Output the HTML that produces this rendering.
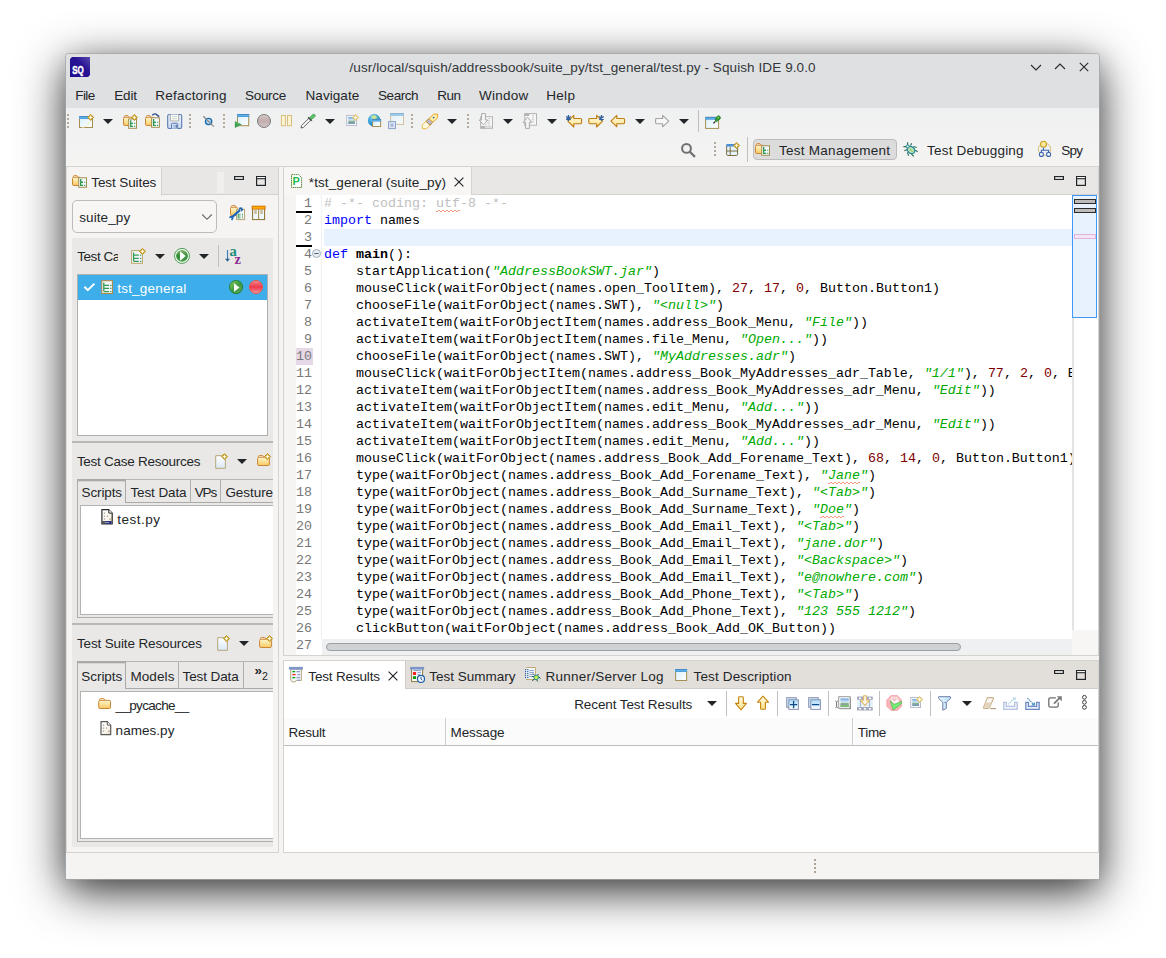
<!DOCTYPE html>
<html lang="en">
<head>
<meta charset="utf-8">
<title>/usr/local/squish/addressbook/suite_py/tst_general/test.py - Squish IDE 9.0.0</title>
<style>

*{box-sizing:border-box;margin:0;padding:0}
html,body{width:1166px;height:958px;overflow:hidden;background:#fff}
body{position:relative;font-family:"Liberation Sans",sans-serif;font-size:13.5px;color:#232629;line-height:normal}
div,span,svg,pre,nav,header,section,ul,li,b,i{position:absolute;display:block}
.t{white-space:pre;font-style:normal;font-weight:400}
.ic{overflow:visible}
#win{left:66px;top:54px;width:1033px;height:825px;background:#f5f4f3;border-radius:3px 3px 0 0;
 box-shadow:0 0 0 1px rgba(164,167,170,.72),0 12px 48px rgba(0,0,0,.78),0 6px 24px rgba(0,0,0,.18)}
#titlebar{left:66px;top:54px;width:1033px;height:54px;background:#dee0e2;border-radius:3px 3px 0 0}
#toolbar{left:66px;top:108px;width:1033px;height:58px;background:linear-gradient(#eff0f1,#f2f2f2 50%,#f5f4f3)}
.hl{background:#d8d4d0}
.vsep{width:1px;background:#c0bfbc}
.dots{width:2px;height:14px;background:repeating-linear-gradient(#b4aa9c 0 2px,transparent 2px 4px)}
.panel{border:1px solid #d6d2ce;background:#f5f4f3}
.tabbar{background:#e8e7e6;border-bottom:1px solid #d5d1cc}
.tab{background:#f5f4f3;border-right:1px solid #d5d1cc}
.sect{background:#e9e8e6}
.white{background:#fff}
.code{font-family:"Liberation Mono",monospace;font-size:13.3333px;line-height:17px;white-space:pre;color:#000}
.code div{position:static;height:17px}
.code span,.code b,.code i{position:static;display:inline}
.k{color:#0000ff}
.s{color:#00aa00;font-style:italic}
.n{color:#800000}
.c{color:#c0c0c0}
.f{font-weight:700}
.sq{background:linear-gradient(135deg,transparent 35%,#f79a80 35% 65%,transparent 65%) 0 100%/4px 2px repeat-x,linear-gradient(45deg,transparent 35%,#f79a80 35% 65%,transparent 65%) 2px 100%/4px 2px repeat-x;padding-bottom:1px}
.ln{font-family:"Liberation Mono",monospace;font-size:13.3333px;line-height:17px;color:#787878;text-align:right;white-space:pre}
.ln div{position:static;height:17px}

</style>
</head>
<body>
<svg width="0" height="0" style="position:absolute;left:0;top:0"><defs>
<linearGradient id="gFold" x1="0" y1="0" x2="0" y2="1"><stop offset="0" stop-color="#fff6cf"/><stop offset=".45" stop-color="#fbe39d"/><stop offset="1" stop-color="#f7c860"/></linearGradient>
<linearGradient id="gArr" x1="0" y1="0" x2="0" y2="1"><stop offset="0" stop-color="#fffbe6"/><stop offset="1" stop-color="#fde08a"/></linearGradient>
<linearGradient id="gWin" x1="0" y1="0" x2="1" y2="1"><stop offset="0" stop-color="#d6f0fd"/><stop offset="1" stop-color="#ffffff"/></linearGradient>
<linearGradient id="gTitle" x1="0" y1="0" x2="0" y2="1"><stop offset="0" stop-color="#3a73b4"/><stop offset=".5" stop-color="#59b4ea"/><stop offset="1" stop-color="#4c8ed0"/></linearGradient>
<linearGradient id="gDoc" x1="0" y1="0" x2="0" y2="1"><stop offset="0" stop-color="#ffffff"/><stop offset="1" stop-color="#d9e8fb"/></linearGradient>
<linearGradient id="gRec" x1="0" y1="0" x2="0" y2="1"><stop offset="0" stop-color="#d6c8c8"/><stop offset=".5" stop-color="#c2adad"/><stop offset="1" stop-color="#d4c6c6"/></linearGradient>
<linearGradient id="gRed" x1="0" y1="0" x2="0" y2="1"><stop offset="0" stop-color="#f28c8c"/><stop offset=".5" stop-color="#f0384e"/><stop offset="1" stop-color="#f49a9a"/></linearGradient>
<linearGradient id="gGreen" x1="0" y1="0" x2="1" y2="1"><stop offset="0" stop-color="#8fd45c"/><stop offset=".5" stop-color="#3f9a40"/><stop offset="1" stop-color="#5aa65a"/></linearGradient>
<linearGradient id="gRun" x1="0" y1="0" x2="0" y2="1"><stop offset="0" stop-color="#86b870"/><stop offset=".5" stop-color="#2f8a35"/><stop offset="1" stop-color="#4ea04c"/></linearGradient>
<linearGradient id="gSave" x1="0" y1="0" x2="0" y2="1"><stop offset="0" stop-color="#f2f6fc"/><stop offset="1" stop-color="#c9d8f0"/></linearGradient>
<linearGradient id="gSky" x1="0" y1="0" x2="0" y2="1"><stop offset="0" stop-color="#6aa0e0"/><stop offset=".45" stop-color="#d8ecf8"/><stop offset=".6" stop-color="#8eb48e"/><stop offset="1" stop-color="#6f92c0"/></linearGradient>
<linearGradient id="gFun" x1="0" y1="0" x2="1" y2="0"><stop offset="0" stop-color="#f0faff"/><stop offset="1" stop-color="#b4e0fb"/></linearGradient>
<linearGradient id="gSq" x1="0" y1="0" x2="0" y2="1"><stop offset="0" stop-color="#a9dcfb"/><stop offset="1" stop-color="#ffffff"/></linearGradient>
<radialGradient id="gGlobe" cx=".4" cy=".3" r=".8"><stop offset="0" stop-color="#7fd0f4"/><stop offset=".6" stop-color="#2a98d6"/><stop offset="1" stop-color="#1d72b4"/></radialGradient>
<linearGradient id="gPage" x1="0" y1="0" x2="1" y2="1"><stop offset="0" stop-color="#ffffff"/><stop offset=".6" stop-color="#fbf6ee"/><stop offset="1" stop-color="#ecd9b8"/></linearGradient>
<linearGradient id="gPen" x1="0" y1="0" x2="1" y2="1"><stop offset="0" stop-color="#f8b030"/><stop offset=".5" stop-color="#fdf2b0"/><stop offset="1" stop-color="#f0a020"/></linearGradient>
</defs></svg>
<div id="win"></div>
<header id="titlebar"></header>
<svg class="ic" style="left:70px;top:57px" width="20" height="20" viewBox="0 0 20 20"><defs><linearGradient id="sqg" x1="0" y1="1" x2="1" y2="0"><stop offset="0" stop-color="#1d0a8c"/><stop offset=".6" stop-color="#2a1496"/><stop offset="1" stop-color="#5a48ac"/></linearGradient></defs><path d="M2 0H20V18L18 20H0V2Z" fill="url(#sqg)"/><text transform="translate(2.3 16.5) scale(.78 1)" style="font-family:'Liberation Sans',sans-serif;font-weight:700;font-size:10.2px" fill="#fff" stroke="#fff" stroke-width=".45">SQ</text></svg>
<span class="t" style="left:349.5px;top:60.00px;letter-spacing:0.089px;color:#33373a;">/usr/local/squish/addressbook/suite_py/tst_general/test.py - Squish IDE 9.0.0</span>
<svg class="ic" style="left:1026px;top:57px" width="68" height="20" viewBox="0 0 68 20" fill="none" stroke="#26292c" stroke-width="1.1"><path d="M5 8L10 13L15 8"/><path d="M29 12L34 7L39 12"/><path d="M53.8 5.8L62.2 14.2M62.2 5.8L53.8 14.2"/></svg>
<span class="t" style="left:75.2px;top:88.00px;letter-spacing:-0.555px;">File</span>
<span class="t" style="left:114.3px;top:88.00px;letter-spacing:-0.189px;">Edit</span>
<span class="t" style="left:155.3px;top:88.00px;letter-spacing:0.215px;">Refactoring</span>
<span class="t" style="left:245px;top:88.00px;letter-spacing:-0.316px;">Source</span>
<span class="t" style="left:305.5px;top:88.00px;letter-spacing:0.072px;">Navigate</span>
<span class="t" style="left:378.1px;top:88.00px;letter-spacing:-0.476px;">Search</span>
<span class="t" style="left:437.2px;top:88.00px;letter-spacing:-0.533px;">Run</span>
<span class="t" style="left:478.9px;top:88.00px;letter-spacing:0.277px;">Window</span>
<span class="t" style="left:546.3px;top:88.00px;letter-spacing:0.278px;">Help</span>
<div id="toolbar"></div>
<div class="hl" style="left:66px;top:166px;width:1033px;height:1px;"></div>
<div class="dots" style="left:67px;top:114px;width:2px;height:14px;"></div>
<svg class="ic" style="left:78px;top:113px;" width="16" height="16" viewBox="0 0 16 16"><g><rect x="1.5" y="3.5" width="13" height="11" fill="url(#gWin)" stroke="#a68d52"/><rect x="1" y="3" width="14" height="3" fill="url(#gTitle)"/></g><path d="M4 14.4Q10.5 14 11.6 8" stroke="#f8ecc0" stroke-width="1.1" fill="none" opacity=".8"/><path d="M12.6 1.3000000000000003L15.7 4.4L12.6 7.5L9.5 4.4Z" fill="#d3ac3a" stroke="#b98f1c" stroke-width=".9" stroke-linejoin="round"/><path d="M12.6 2.1000000000000005L13.2 3.8000000000000003L14.899999999999999 4.4L13.2 5.0L12.6 6.7L12.0 5.0L10.3 4.4L12.0 3.8000000000000003Z" fill="#fffdf2"/></svg>
<svg class="ic" style="left:103px;top:119px" width="10" height="5" viewBox="0 0 10 5"><path d="M0 0H10L5 5Z" fill="#232629"/></svg>
<svg class="ic" style="left:123px;top:113px;" width="16" height="16" viewBox="0 0 16 16"><path d="M1.4 4.6000000000000005V3.6Q1.4 2.5 2.5 2.5H4.199999999999999Q5.3 2.5 5.3 3.6V4.6000000000000005Z" fill="#fffaf0" stroke="#cf8a3e" stroke-width="1" stroke-linejoin="round"/><rect x="0.5" y="4.2" width="8" height="8.3" rx="1.3" fill="url(#gFold)" stroke="#cc8638" stroke-width="1"/><rect x="5.7" y="6.0" width="7.800000000000001" height="9.3" fill="#f6f8fd" stroke="#a28f4e"/><path d="M7.7 7.3V13.3H10.0M7.7 10.35H10.0" fill="none" stroke="#2b9a50" stroke-width="1.3"/><path d="M11.2 10.35h1.1M11.2 13.3h1.1" stroke="#2b9a50" stroke-width="1.2"/><path d="M11.4 1.4L14.5 4.5L11.4 7.6L8.3 4.5Z" fill="#d3ac3a" stroke="#b98f1c" stroke-width=".9" stroke-linejoin="round"/><path d="M11.4 2.2L12.0 3.9L13.7 4.5L12.0 5.1L11.4 6.8L10.8 5.1L9.100000000000001 4.5L10.8 3.9Z" fill="#fffdf2"/></svg>
<svg class="ic" style="left:145px;top:113px;" width="16" height="16" viewBox="0 0 16 16"><path d="M1.4 4.6000000000000005V3.6Q1.4 2.5 2.5 2.5H4.199999999999999Q5.3 2.5 5.3 3.6V4.6000000000000005Z" fill="#fffaf0" stroke="#cf8a3e" stroke-width="1" stroke-linejoin="round"/><rect x="0.5" y="4.2" width="8" height="8.3" rx="1.3" fill="url(#gFold)" stroke="#cc8638" stroke-width="1"/><rect x="6.6" y="4.8" width="7.800000000000001" height="9.5" fill="#f6f8fd" stroke="#a28f4e"/><path d="M8.6 6.1V12.3H10.899999999999999M8.6 9.25H10.899999999999999" fill="none" stroke="#2b9a50" stroke-width="1.3"/><path d="M12.1 9.25h1.1M12.1 12.3h1.1" stroke="#2b9a50" stroke-width="1.2"/><path d="M7.3 2.2Q10 -.6 12.6 2.4" fill="none" stroke="#1d3f80" stroke-width="1.3"/><path d="M11 2.2H14.2V4.6Z" fill="#1d3f80"/></svg>
<svg class="ic" style="left:167px;top:113px;" width="16" height="16" viewBox="0 0 16 16"><rect x=".7" y="1.5" width="14" height="14" rx="1.6" fill="url(#gSave)" stroke="#5b79b2" stroke-width="1.1"/><path d="M3.3 1.6V7Q3.3 7.8 4.1 7.8H10.9Q11.7 7.8 11.7 7V1.6" fill="#fcfdf6" stroke="#8f9ca2" stroke-width=".9"/><path d="M5 3.6H10M5 5.6H10" stroke="#c3ccd0" stroke-width=".8"/><path d="M4 7.2H11" stroke="#efe6c0" stroke-width=".8"/><path d="M4.5 15.4V11.2Q4.5 10.3 5.4 10.3H9.8Q10.7 10.3 10.7 11.2V15.4" fill="#e9effa" stroke="#5b79b2" stroke-width="1"/><rect x="5.6" y="11.6" width="2.4" height="3.2" fill="#a9c3ee"/><rect x="8.6" y="11.6" width="1.1" height="3.2" fill="#2e4f8e"/></svg>
<div class="dots" style="left:189px;top:114px;width:2px;height:14px;"></div>
<svg class="ic" style="left:201px;top:113px;" width="16" height="16" viewBox="0 0 16 16"><circle cx="7.6" cy="8.5" r="3.1" fill="#b9dcf0" stroke="#1c6bb0" stroke-width="1.4"/><path d="M2.3 3.2L12.8 13.6" stroke="#8b8b8b" stroke-width="1.3"/></svg>
<div class="dots" style="left:223px;top:114px;width:2px;height:14px;"></div>
<svg class="ic" style="left:234px;top:113px;" width="16" height="16" viewBox="0 0 16 16"><g><rect x="3.5" y="1.5" width="11.2" height="11.2" fill="url(#gWin)" stroke="#a68d52"/><rect x="3" y="1" width="12.2" height="3" fill="url(#gTitle)"/></g><path d="M.9 8V15L7.9 11.5Z" fill="#3f9f4f"/><path d="M1.6 9.4L5.4 11.2" stroke="#7cc87c" stroke-width=".8"/></svg>
<svg class="ic" style="left:256px;top:113px;" width="16" height="16" viewBox="0 0 16 16"><circle cx="8" cy="8" r="6.5" fill="url(#gRec)" stroke="#7e7e7e" stroke-width="1"/></svg>
<svg class="ic" style="left:279px;top:113px;" width="16" height="16" viewBox="0 0 16 16"><rect x="2.4" y="2.5" width="4" height="10.2" fill="#fdf3d0" stroke="#d7bf7e"/><rect x="8.5" y="2.5" width="4" height="10.2" fill="#fdf3d0" stroke="#d7bf7e"/></svg>
<svg class="ic" style="left:300px;top:113px;" width="16" height="16" viewBox="0 0 16 16"><path d="M1 15L1.6 12.6L9 5.2L10.8 7L3.4 14.4Z" fill="#fff" stroke="#5a5a5a" stroke-width="1" stroke-linejoin="round"/><path d="M8.2 4.2L11.8 7.8" stroke="#4a4a4a" stroke-width="1.6"/><path d="M9.8 4.6L12.6 1.6Q14 .6 15 1.8Q15.8 3 14.4 4.2L11.4 6.4Z" fill="#53cc68" stroke="#4a8a56" stroke-width=".7"/></svg>
<svg class="ic" style="left:325px;top:119px" width="10" height="5" viewBox="0 0 10 5"><path d="M0 0H10L5 5Z" fill="#232629"/></svg>
<svg class="ic" style="left:345px;top:113px;" width="16" height="16" viewBox="0 0 16 16"><rect x="1.7" y="2.5" width="9.8" height="10" fill="#fafcff" stroke="#b9bccb"/><rect x="3.2" y="4" width="6.800000000000001" height="7" fill="url(#gSky)"/><path d="M10.6 1.4L13.7 4.5L10.6 7.6L7.5 4.5Z" fill="#e8d28e" stroke="#d9bf6e" stroke-width=".9" stroke-linejoin="round"/><path d="M10.6 2.2L11.2 3.9L12.899999999999999 4.5L11.2 5.1L10.6 6.8L10.0 5.1L8.3 4.5L10.0 3.9Z" fill="#fffdf2"/></svg>
<svg class="ic" style="left:367px;top:113px;" width="16" height="16" viewBox="0 0 16 16"><circle cx="7.2" cy="7.4" r="6.3" fill="url(#gGlobe)"/><path d="M4 3.5Q6 1.8 8.5 2.4Q10.4 3.4 9.6 5Q8 6.6 6 5.6Q4.4 5.4 4 3.5Z" fill="#cfe28c"/><path d="M10 3.2Q11.8 4 11.6 5.4L10.4 5Z" fill="#7fbf4a"/><g><rect x="5.6" y="6.6" width="8" height="6.9" fill="url(#gWin)" stroke="#a68d52"/><rect x="5.1" y="6.1" width="9" height="2.4" fill="url(#gTitle)"/></g></svg>
<svg class="ic" style="left:388px;top:113px;" width="16" height="16" viewBox="0 0 16 16"><g opacity=".6"><rect x="2.6" y="0.6" width="12.9" height="10.8" fill="url(#gWin)" stroke="#b9a468"/><rect x="2.1" y="0.1" width="13.9" height="2.6" fill="url(#gTitle)"/></g><rect x=".5" y="8.6" width="7" height="7" fill="#dfe5f3" stroke="#8da2cc"/><rect x="2.4" y="10.5" width="3.2" height="3.2" fill="#a9b7dc"/></svg>
<div class="dots" style="left:411px;top:114px;width:2px;height:14px;"></div>
<svg class="ic" style="left:422px;top:113px;" width="16" height="16" viewBox="0 0 16 16"><path d="M.4 15.6L.2 12L6 6.6L10 10.4L4.4 15.8Z" fill="#fffbe0" stroke="#f0b030" stroke-width=".9" stroke-linejoin="round"/><path d="M4 8.4L7 5.4L10.8 9.2L8 12.2Z" fill="#bdb8c6" stroke="#a8853c" stroke-width=".9"/><path d="M7 5.4L11.6 1.2L15.4 1L15.6 5L10.8 9.2Z" fill="#fdf0ae" stroke="#f0a428" stroke-width="1" stroke-linejoin="round"/><circle cx="11.6" cy="4.6" r=".9" fill="#3559a8"/></svg>
<svg class="ic" style="left:447px;top:119px" width="10" height="5" viewBox="0 0 10 5"><path d="M0 0H10L5 5Z" fill="#232629"/></svg>
<div class="dots" style="left:467px;top:114px;width:2px;height:14px;"></div>
<svg class="ic" style="left:478px;top:113px;" width="16" height="16" viewBox="0 0 16 16"><rect x="2.7" y="3.7" width="11.8" height="11.6" fill="#f7f7f7" stroke="#b4b4b4"/><path d="M10.2 5.7h2M10.2 7.8h2M9.2 9.9h3M7.2 12.0h2M10.2 12.0h2" stroke="#c8c8c8" stroke-width="1"/><rect x="2.7" y="13" width="4.6" height="2.4" fill="#b4b4b4"/><path d="M8 13.9h6" stroke="#c8c8c8" stroke-width="1"/><path d="M3.6 .6H7.4V7H9.8L5.5 11.8L1.2 7H3.6Z" fill="#f8f8f8" stroke="#a9a9a9" stroke-width="1" stroke-linejoin="round"/></svg>
<svg class="ic" style="left:503px;top:119px" width="10" height="5" viewBox="0 0 10 5"><path d="M0 0H10L5 5Z" fill="#232629"/></svg>
<svg class="ic" style="left:522px;top:113px;" width="16" height="16" viewBox="0 0 16 16"><rect x="2.7" y="0.6" width="11.8" height="11.6" fill="#f7f7f7" stroke="#b4b4b4"/><path d="M10.2 2.6h2M10.2 4.699999999999999h2M9.2 6.8h3M7.2 8.9h2M10.2 8.9h2" stroke="#c8c8c8" stroke-width="1"/><rect x="2.7" y=".6" width="4.6" height="2.4" fill="#b4b4b4"/><path d="M5.5 4.2L9.8 9.4H7.4V15.4H3.6V9.4H1.2Z" fill="#f4f4f4" stroke="#a9a9a9" stroke-width="1" stroke-linejoin="round"/></svg>
<svg class="ic" style="left:547px;top:119px" width="10" height="5" viewBox="0 0 10 5"><path d="M0 0H10L5 5Z" fill="#232629"/></svg>
<svg class="ic" style="left:566px;top:113px;" width="16" height="16" viewBox="0 0 16 16"><path d="M1.8 8.2L7.8 2.4V5.5H14.4Q15.6 5.5 15.6 6.6V9.6Q15.6 10.7 14.4 10.7H7.8V14Z" fill="url(#gArr)" stroke="#bf7d12" stroke-width="1.1" stroke-linejoin="round"/><path d="M2.4 1.9000000000000004V7.9M0.10000000000000009 3.4000000000000004L4.699999999999999 6.4M0.10000000000000009 6.4L4.699999999999999 3.4000000000000004" stroke="#2f5f9e" stroke-width="1.25" fill="none"/></svg>
<svg class="ic" style="left:588px;top:113px;" width="16" height="16" viewBox="0 0 16 16"><path d="M14.6 8.2L8.6 2.4V5.5H2Q.8 5.5 .8 6.6V9.6Q.8 10.7 2 10.7H8.6V14Z" fill="url(#gArr)" stroke="#bf7d12" stroke-width="1.1" stroke-linejoin="round"/><path d="M13.5 1.9000000000000004V7.9M11.2 3.4000000000000004L15.8 6.4M11.2 6.4L15.8 3.4000000000000004" stroke="#2f5f9e" stroke-width="1.25" fill="none"/></svg>
<svg class="ic" style="left:610px;top:113px;" width="16" height="16" viewBox="0 0 16 16"><path d="M1 8.1L6.8 2.4V5.5H13.4Q14.6 5.5 14.6 6.6V9.6Q14.6 10.7 13.4 10.7H6.8V13.8Z" fill="url(#gArr)" stroke="#bf7d12" stroke-width="1.1" stroke-linejoin="round"/></svg>
<svg class="ic" style="left:635px;top:119px" width="10" height="5" viewBox="0 0 10 5"><path d="M0 0H10L5 5Z" fill="#232629"/></svg>
<svg class="ic" style="left:654px;top:113px;" width="16" height="16" viewBox="0 0 16 16"><path d="M14.8 8.1L8.6 2.4V5.5H2.8Q1.6 5.5 1.6 6.6V9.6Q1.6 10.7 2.8 10.7H8.6V13.8Z" fill="#f7f7f7" stroke="#a3a3a3" stroke-width="1.1" stroke-linejoin="round"/></svg>
<svg class="ic" style="left:679px;top:119px" width="10" height="5" viewBox="0 0 10 5"><path d="M0 0H10L5 5Z" fill="#232629"/></svg>
<div class="vsep" style="left:698px;top:110px;width:1px;height:22px;"></div>
<svg class="ic" style="left:705px;top:113px;" width="16" height="16" viewBox="0 0 16 16"><g><rect x="0.6" y="4.4" width="13" height="11" fill="url(#gWin)" stroke="#a68d52"/><rect x="0.1" y="3.9" width="14" height="2.8" fill="url(#gTitle)"/></g><path d="M8.4 10.4L10.4 8.4" stroke="#222" stroke-width="1.3"/><path d="M10 7L12.4 3.2Q13.6 2.2 14.8 3.4Q16 4.8 15 6L11.6 8.6Z" fill="#2f9a2f" stroke="#1d7a24" stroke-width=".8"/><circle cx="13.2" cy="4.6" r=".9" fill="#7ad04a"/></svg>
<svg class="ic" style="left:680px;top:142px;" width="16" height="16" viewBox="0 0 16 16"><circle cx="6.5" cy="6.4" r="4.4" fill="none" stroke="#6f6f6f" stroke-width="2"/><path d="M9.8 9.7L15 14.9" stroke="#6f6f6f" stroke-width="2.2"/></svg>
<div class="dots" style="left:714px;top:142px;width:2px;height:14px;"></div>
<svg class="ic" style="left:725px;top:141px;" width="16" height="16" viewBox="0 0 16 16"><rect x="1.6" y="3.5" width="11" height="11" rx="1.2" fill="#e4f3fd" stroke="#7d6d40"/><path d="M1.2 5.4V4.4Q1.2 3 2.6 3H11.6Q13 3 13 4.4V5.6Z" fill="#4a8fd8"/><path d="M5.2 5.6V14.4M1.6 10H12.6" stroke="#7d6d40" stroke-width="1"/><path d="M11.5 1.4L14.6 4.5L11.5 7.6L8.4 4.5Z" fill="#d3ac3a" stroke="#b98f1c" stroke-width=".9" stroke-linejoin="round"/><path d="M11.5 2.2L12.1 3.9L13.8 4.5L12.1 5.1L11.5 6.8L10.9 5.1L9.2 4.5L10.9 3.9Z" fill="#fffdf2"/></svg>
<div class="vsep" style="left:747px;top:137px;width:1px;height:25px;"></div>
<div style="left:753px;top:139px;width:144px;height:21px;background:#dcdcdc;border:1px solid #bcbcbc;border-radius:4px"></div>
<svg class="ic" style="left:755px;top:141px;" width="16" height="16" viewBox="0 0 16 16"><path d="M1.4 4.6000000000000005V3.6Q1.4 2.5 2.5 2.5H4.199999999999999Q5.3 2.5 5.3 3.6V4.6000000000000005Z" fill="#fffaf0" stroke="#cf8a3e" stroke-width="1" stroke-linejoin="round"/><rect x="0.5" y="4.2" width="8" height="8.3" rx="1.3" fill="url(#gFold)" stroke="#cc8638" stroke-width="1"/><rect x="6.7" y="4.8" width="7.800000000000001" height="9.5" fill="#f6f8fd" stroke="#a28f4e"/><path d="M8.7 6.1V12.3H11.0M8.7 9.25H11.0" fill="none" stroke="#2b9a50" stroke-width="1.3"/><path d="M12.2 9.25h1.1M12.2 12.3h1.1" stroke="#2b9a50" stroke-width="1.2"/></svg>
<span class="t" style="left:779px;top:143.00px;letter-spacing:0.263px;">Test Management</span>
<svg class="ic" style="left:903px;top:141px;" width="16" height="16" viewBox="0 0 16 16"><g stroke="#2f6f50" stroke-width="1.1" fill="none"><path d="M4.6 1.2V4M8.6 2.2L7.6 4.4M.4 5.6H3.6M10.4 5.4L13.6 6.4M1.4 9.6L4 8.8M12.4 9.2L14.6 10.8M4.4 11.4L5.6 14.8M8.4 13L10.8 15.4"/></g><ellipse cx="8" cy="9" rx="4.2" ry="3.2" transform="rotate(40 8 9)" fill="#bfe0a8" stroke="#1f86a4" stroke-width="1.2"/><circle cx="4.7" cy="5.4" r="1.5" fill="#d8efc0" stroke="#1f86a4" stroke-width="1"/><path d="M6.6 7.4L9.6 10.8" stroke="#8cc46c" stroke-width="1"/></svg>
<span class="t" style="left:927px;top:143.00px;letter-spacing:0.213px;">Test Debugging</span>
<svg class="ic" style="left:1037px;top:141px;" width="16" height="16" viewBox="0 0 16 16"><circle cx="7.5" cy="8.2" r="6.2" fill="#eef1fa" stroke="#d5bc62" stroke-width=".9"/><circle cx="6.5" cy="3.3" r="3" fill="#fce79c" stroke="#c8a224" stroke-width="1.1"/><path d="M6.5 6.6V9.2M4.4 11.4V9.2H11.6V11.4" fill="none" stroke="#3d66aa" stroke-width="1.1"/><circle cx="4.4" cy="13.4" r="2" fill="#fff" stroke="#3d66aa" stroke-width="1.1"/><circle cx="11.6" cy="13.4" r="2" fill="#fff" stroke="#3d66aa" stroke-width="1.1"/></svg>
<span class="t" style="left:1061.2px;top:143.00px;letter-spacing:-0.783px;">Spy</span>
<div class="panel" style="left:66px;top:166px;width:213px;height:687px;border-left-color:#dcd8d4"></div>
<div class="tabbar" style="left:67px;top:167px;width:211px;height:28px;"></div>
<div class="tab" style="left:67px;top:167px;width:95px;height:28px;height:29px"></div>
<div style="left:217px;top:172px;width:7px;height:21px;background:#f0efee"></div>
<svg class="ic" style="left:72px;top:173px;" width="16" height="16" viewBox="0 0 16 16"><path d="M1.4 4.6000000000000005V3.6Q1.4 2.5 2.5 2.5H4.199999999999999Q5.3 2.5 5.3 3.6V4.6000000000000005Z" fill="#fffaf0" stroke="#cf8a3e" stroke-width="1" stroke-linejoin="round"/><rect x="0.5" y="4.2" width="8" height="8.3" rx="1.3" fill="url(#gFold)" stroke="#cc8638" stroke-width="1"/><rect x="6.7" y="4.8" width="7.800000000000001" height="9.5" fill="#f6f8fd" stroke="#a28f4e"/><path d="M8.7 6.1V12.3H11.0M8.7 9.25H11.0" fill="none" stroke="#2b9a50" stroke-width="1.3"/><path d="M12.2 9.25h1.1M12.2 12.3h1.1" stroke="#2b9a50" stroke-width="1.2"/></svg>
<span class="t" style="left:91.3px;top:175.00px;letter-spacing:-0.103px;">Test Suites</span>
<svg class="ic" style="left:234px;top:176px;" width="10" height="4" viewBox="0 0 10 4"><rect x=".6" y=".6" width="8.8" height="2.8" fill="#fff" stroke="#232629" stroke-width="1.2"/></svg>
<svg class="ic" style="left:256px;top:176px;" width="10" height="10" viewBox="0 0 10 10"><rect x=".6" y=".6" width="8.8" height="8.8" fill="none" stroke="#232629" stroke-width="1.2"/><rect x="1.1" y="1.1" width="7.8" height="1.4" fill="#fff"/><path d="M.6 2.7H9.4" stroke="#232629" stroke-width="1.1"/></svg>
<div style="left:72px;top:200px;width:145px;height:33px;border:1px solid #bcbcbc;border-radius:5px;background:#f7f6f5"></div>
<span class="t" style="left:79.2px;top:210.00px;letter-spacing:0.100px;">suite_py</span>
<svg class="ic" style="left:201px;top:213px" width="12" height="8" viewBox="0 0 12 8" fill="none" stroke="#666a6e" stroke-width="1.15"><path d="M1.2 1.5L6 6.3L10.8 1.5"/></svg>
<svg class="ic" style="left:229px;top:205px;" width="16" height="16" viewBox="0 0 16 16"><path d="M2.4 2.6V1.6Q2.4 0.5 3.5 0.5H5.6Q6.7 0.5 6.7 1.6V2.6Z" fill="#fffaf0" stroke="#cf8a3e" stroke-width="1" stroke-linejoin="round"/><rect x="1.5" y="2.2" width="7" height="8.3" rx="1.3" fill="url(#gFold)" stroke="#cc8638" stroke-width="1"/><rect x="7.6" y="4.4" width="8" height="10.2" fill="#f5f7fb" stroke="#b4a473"/><path d="M9.2 9.2V13H11.6M9.2 11H11.6M9.2 9.2H11.6M13 9.4h1M13 11h1M13 12.8h1" stroke="#4fa567" stroke-width="1.1" fill="none"/><path d="M2.2 12.8L11 5.2" stroke="#1d66b6" stroke-width="2.2"/><path d="M.4 12.6L2.2 11.4L3.8 13.2L2.6 15.2" fill="none" stroke="#1d66b6" stroke-width="1.5"/><path d="M10 3.6L12.4 3L13.4 4.4L12.2 6.2" fill="none" stroke="#1d66b6" stroke-width="1.5"/></svg>
<svg class="ic" style="left:251px;top:205px;" width="16" height="16" viewBox="0 0 16 16"><rect x="1.6" y="1.6" width="12" height="13" fill="#eef8fd" stroke="#8a6d2e"/><rect x="1.1" y="1.1" width="13" height="3" fill="#ffae00" stroke="#cc6a08" stroke-width=".8"/><path d="M7.6 4.2V14.4" stroke="#a8904e" stroke-width="1.1"/><path d="M3.2 6H5.8M3.2 8H5.8M9.2 6H11.8M9.2 8H11.8" stroke="#a8853c" stroke-width="1.1"/></svg>
<div class="sect" style="left:72px;top:238px;width:201px;height:204px;"></div>
<span class="t" style="left:77.2px;top:249.00px;letter-spacing:-0.430px;width:40.6px;overflow:hidden;">Test Cases</span>
<svg class="ic" style="left:131px;top:248px;" width="16" height="16" viewBox="0 0 16 16"><rect x="0.6" y="2.6" width="10.8" height="12.7" fill="#f4f6fc" stroke="#b9a56a"/><path d="M2.6 4.4V13.333999999999998M2.6 7.1690000000000005H7.800000000000001M2.6 10.319999999999999H7.800000000000001M2.6 13.333999999999998H7.800000000000001" fill="none" stroke="#2f9d55" stroke-width="1.25"/><path d="M9.0 7.1690000000000005h1.2M9.0 10.319999999999999h1.2M9.0 13.333999999999998h1.2" stroke="#2f9d55" stroke-width="1.25"/><path d="M11.5 0.2999999999999998L14.6 3.4L11.5 6.5L8.4 3.4Z" fill="#d3ac3a" stroke="#b98f1c" stroke-width=".9" stroke-linejoin="round"/><path d="M11.5 1.1L12.1 2.8L13.8 3.4L12.1 4.0L11.5 5.699999999999999L10.9 4.0L9.2 3.4L10.9 2.8Z" fill="#fffdf2"/></svg>
<svg class="ic" style="left:155px;top:254px" width="10" height="5" viewBox="0 0 10 5"><path d="M0 0H10L5 5Z" fill="#232629"/></svg>
<svg class="ic" style="left:174px;top:248px;" width="16" height="16" viewBox="0 0 16 16"><circle cx="8" cy="7.9" r="7.5" fill="#f4fbf4" stroke="#3d9448" stroke-width=".9"/><circle cx="8" cy="7.9" r="5.9" fill="url(#gRun)"/><path d="M6 3.2V12.8L11.9 8Z" fill="#fff"/></svg>
<svg class="ic" style="left:199px;top:254px" width="10" height="5" viewBox="0 0 10 5"><path d="M0 0H10L5 5Z" fill="#232629"/></svg>
<div class="vsep" style="left:218px;top:245px;width:1px;height:22px;"></div>
<svg class="ic" style="left:224px;top:248px;" width="16" height="16" viewBox="0 0 16 16"><path d="M3.5 2V12" stroke="#3f80bc" stroke-width="1.2"/><path d="M1 10.8H6L3.5 13.8Z" fill="#35608a"/><text x="5.6" y="8" font-family="Liberation Serif, serif" font-weight="700" font-size="14.5" fill="#1a8c7c">a</text><text x="10.6" y="16" font-family="Liberation Serif, serif" font-weight="700" font-size="14.5" fill="#8c2b94">z</text></svg>
<div style="left:77px;top:274px;width:191px;height:162px;border:1px solid #b0b0b0;background:#fff"></div>
<div style="left:78px;top:275px;width:189px;height:25px;background:#3daee9"></div>
<svg class="ic" style="left:83px;top:282px" width="13" height="10" viewBox="0 0 13 10" fill="none" stroke="#fff" stroke-width="2"><path d="M1.4 4.8L4.8 8.2L11.4 1.6"/></svg>
<svg class="ic" style="left:101px;top:280px;" width="16" height="16" viewBox="0 0 16 16"><rect x="0.8" y="0.7" width="10.6" height="12.8" fill="#f4f6fc" stroke="#b5873a"/><path d="M2.8 2.5V11.516M2.8 5.306H8.0M2.8 8.479999999999999H8.0M2.8 11.516H8.0" fill="none" stroke="#2f9d55" stroke-width="1.25"/><path d="M9.2 5.306h1.2M9.2 8.479999999999999h1.2M9.2 11.516h1.2" stroke="#2f9d55" stroke-width="1.25"/></svg>
<span class="t" style="left:117.2px;top:280.50px;letter-spacing:0.220px;color:#fff;">tst_general</span>
<svg class="ic" style="left:229px;top:280px;" width="16" height="16" viewBox="0 0 16 16"><circle cx="7.1" cy="7.1" r="6.6" fill="url(#gGreen)" stroke="#1f7d36" stroke-width=".9"/><path d="M5 3.2V11.8L10.5 7.4Z" fill="#fff"/></svg>
<svg class="ic" style="left:249px;top:280px;" width="16" height="16" viewBox="0 0 16 16"><circle cx="7" cy="7" r="6.6" fill="url(#gRed)" stroke="#e8503e" stroke-width=".8"/></svg>
<div style="left:72px;top:441px;width:201px;height:2px;background:#b8b8b7"></div>
<div class="sect" style="left:72px;top:443px;width:201px;height:181px;"></div>
<span class="t" style="left:76.9px;top:454.00px;letter-spacing:-0.267px;">Test Case Resources</span>
<svg class="ic" style="left:214px;top:453px;" width="16" height="16" viewBox="0 0 16 16"><path d="M1.7 2.7H8L11.4 6V15.3H1.7Z" fill="url(#gDoc)" stroke="#b6a776" stroke-width="1"/><path d="M10.5 0.5L13.6 3.6L10.5 6.7L7.4 3.6Z" fill="#d3ac3a" stroke="#b98f1c" stroke-width=".9" stroke-linejoin="round"/><path d="M10.5 1.3000000000000003L11.1 3.0L12.8 3.6L11.1 4.2L10.5 5.9L9.9 4.2L8.2 3.6L9.9 3.0Z" fill="#fffdf2"/></svg>
<svg class="ic" style="left:237px;top:459px" width="10" height="5" viewBox="0 0 10 5"><path d="M0 0H10L5 5Z" fill="#232629"/></svg>
<svg class="ic" style="left:257px;top:453px;clip-path:inset(0 0 0 0)" width="16" height="16" viewBox="0 0 16 16"><path d="M1.5 4.6000000000000005V3.6Q1.5 2.5 2.6 2.5H5.299999999999999Q6.3999999999999995 2.5 6.3999999999999995 3.6V4.6000000000000005Z" fill="#fffaf0" stroke="#cf8a3e" stroke-width="1" stroke-linejoin="round"/><rect x="0.6" y="4.2" width="11.8" height="8.3" rx="1.3" fill="url(#gFold)" stroke="#cc8638" stroke-width="1"/><path d="M10.5 0.5L13.6 3.6L10.5 6.7L7.4 3.6Z" fill="#d3ac3a" stroke="#b98f1c" stroke-width=".9" stroke-linejoin="round"/><path d="M10.5 1.3000000000000003L11.1 3.0L12.8 3.6L11.1 4.2L10.5 5.9L9.9 4.2L8.2 3.6L9.9 3.0Z" fill="#fffdf2"/></svg>
<div style="left:77px;top:479px;width:196px;height:1px;background:#b6b6b5"></div>
<div style="left:77px;top:502px;width:196px;height:1px;background:#aaaaa9"></div>
<div style="left:77px;top:479px;width:49px;height:24px;background:#e9e8e6;border-left:1px solid #adadac;border-right:1px solid #a9a9a8;border-top:2px solid #a9a9a9"></div>
<div style="left:78px;top:481px;width:47px;height:1px;background:#d4d4d3"></div>
<span class="t" style="left:81.5px;top:484.90px;letter-spacing:-0.111px;">Scripts</span>
<div style="left:190px;top:480px;width:1px;height:23px;background:#b0b0af"></div>
<span class="t" style="left:130.4px;top:484.90px;letter-spacing:-0.104px;">Test Data</span>
<div style="left:220px;top:480px;width:1px;height:23px;background:#b0b0af"></div>
<span class="t" style="left:194.7px;top:484.90px;letter-spacing:-1.133px;">VPs</span>
<span class="t" style="left:225.4px;top:484.90px;letter-spacing:-0.055px;width:47.599999999999994px;overflow:hidden;">Gestures</span>
<div style="left:77px;top:503px;width:196px;height:115px;border:1px solid #adadac;border-right:0;border-top:0;background:#e9e8e6"></div>
<div style="left:80px;top:505px;width:193px;height:110px;border:1px solid #b2b2b1;border-right:0;background:#fff"></div>
<svg class="ic" style="left:101px;top:509px;" width="16" height="16" viewBox="0 0 16 16"><path d="M0.8999999999999999 0.7H7.800000000000001L11.200000000000001 4.1V15.0H0.8999999999999999Z" fill="url(#gPage)" stroke="#2a2a2a" stroke-width="1.2" stroke-linejoin="round"/><path d="M7.800000000000001 0.7V4.1H11.200000000000001" fill="#fff" stroke="#2a2a2a" stroke-width="1" stroke-linejoin="round"/><path d="M2.8 4.1h1.3M2.8 7.1h1.3M5.8 7.1h1.3M2.8 10.1h1.3M8.3 10.1h1.3" stroke="#8a8a84" stroke-width="1"/><rect x="1.5" y="12.0" width="9.1" height="3" fill="#2c3480"/><rect x="1.5" y="12.0" width="3" height="3" fill="#555"/><path d="M4.5 13.5h1M6.5 13.5h1" stroke="#fff" stroke-width="1"/></svg>
<span class="t" style="left:117.2px;top:511.60px;letter-spacing:0.503px;">test.py</span>
<div style="left:72px;top:623px;width:201px;height:2px;background:#b8b8b7"></div>
<div class="sect" style="left:72px;top:625px;width:201px;height:222px;"></div>
<span class="t" style="left:76.9px;top:636.00px;letter-spacing:-0.135px;">Test Suite Resources</span>
<svg class="ic" style="left:216px;top:635px;" width="16" height="16" viewBox="0 0 16 16"><path d="M1.7 2.7H8L11.4 6V15.3H1.7Z" fill="url(#gDoc)" stroke="#b6a776" stroke-width="1"/><path d="M10.5 0.5L13.6 3.6L10.5 6.7L7.4 3.6Z" fill="#d3ac3a" stroke="#b98f1c" stroke-width=".9" stroke-linejoin="round"/><path d="M10.5 1.3000000000000003L11.1 3.0L12.8 3.6L11.1 4.2L10.5 5.9L9.9 4.2L8.2 3.6L9.9 3.0Z" fill="#fffdf2"/></svg>
<svg class="ic" style="left:239px;top:641px" width="10" height="5" viewBox="0 0 10 5"><path d="M0 0H10L5 5Z" fill="#232629"/></svg>
<svg class="ic" style="left:259px;top:635px;" width="16" height="16" viewBox="0 0 16 16"><path d="M1.5 4.6000000000000005V3.6Q1.5 2.5 2.6 2.5H5.299999999999999Q6.3999999999999995 2.5 6.3999999999999995 3.6V4.6000000000000005Z" fill="#fffaf0" stroke="#cf8a3e" stroke-width="1" stroke-linejoin="round"/><rect x="0.6" y="4.2" width="11.8" height="8.3" rx="1.3" fill="url(#gFold)" stroke="#cc8638" stroke-width="1"/><path d="M10.5 0.5L13.6 3.6L10.5 6.7L7.4 3.6Z" fill="#d3ac3a" stroke="#b98f1c" stroke-width=".9" stroke-linejoin="round"/><path d="M10.5 1.3000000000000003L11.1 3.0L12.8 3.6L11.1 4.2L10.5 5.9L9.9 4.2L8.2 3.6L9.9 3.0Z" fill="#fffdf2"/></svg>
<div style="left:77px;top:661px;width:196px;height:1px;background:#b6b6b5"></div>
<div style="left:77px;top:688px;width:196px;height:1px;background:#aaaaa9"></div>
<div style="left:77px;top:661px;width:49px;height:28px;background:#e9e8e6;border-left:1px solid #adadac;border-right:1px solid #a9a9a8;border-top:2px solid #a9a9a9"></div>
<div style="left:78px;top:663px;width:47px;height:1px;background:#d4d4d3"></div>
<span class="t" style="left:81.3px;top:668.80px;letter-spacing:-0.044px;">Scripts</span>
<div style="left:178px;top:662px;width:1px;height:27px;background:#b0b0af"></div>
<span class="t" style="left:130.4px;top:668.80px;letter-spacing:0.114px;">Models</span>
<div style="left:243px;top:662px;width:1px;height:27px;background:#b0b0af"></div>
<span class="t" style="left:182.5px;top:668.80px;letter-spacing:-0.104px;">Test Data</span>
<span class="t" style="left:254.6px;top:663.00px;font-weight:700">»</span>
<span class="t" style="left:262px;top:670.10px;font-size:10.6px;">2</span>
<div style="left:77px;top:689px;width:196px;height:153px;border:1px solid #adadac;border-right:0;border-top:0;background:#e9e8e6"></div>
<div style="left:80px;top:691px;width:193px;height:148px;border:1px solid #b2b2b1;border-right:0;background:#fff"></div>
<svg class="ic" style="left:97px;top:696px;" width="16" height="16" viewBox="0 0 16 16"><path d="M2.5999999999999996 4.700000000000001V3.7Q2.5999999999999996 2.6 3.7 2.6H6.3999999999999995Q7.5 2.6 7.5 3.7V4.700000000000001Z" fill="#fffaf0" stroke="#cf8a3e" stroke-width="1" stroke-linejoin="round"/><rect x="1.7" y="4.300000000000001" width="11.8" height="8.2" rx="1.3" fill="url(#gFold)" stroke="#cc8638" stroke-width="1"/></svg>
<span class="t" style="left:115.6px;top:697.60px;letter-spacing:-0.673px;">__pycache__</span>
<svg class="ic" style="left:100px;top:721px;" width="16" height="16" viewBox="0 0 16 16"><path d="M1.0 0.7H7.300000000000001L10.700000000000001 4.1V13.7H1.0Z" fill="url(#gPage)" stroke="#5a5a5a" stroke-width="1.2" stroke-linejoin="round"/><path d="M7.300000000000001 0.7V4.1H10.700000000000001" fill="#fff" stroke="#5a5a5a" stroke-width="1" stroke-linejoin="round"/><path d="M2.9 4.1h1.3M2.9 7.1h1.3M5.9 7.1h1.3M2.9 10.1h1.3M8.4 10.1h1.3" stroke="#8a8a84" stroke-width="1"/></svg>
<span class="t" style="left:115.6px;top:722.70px;letter-spacing:0.038px;">names.py</span>
<div style="left:273px;top:195px;width:5px;height:657px;background:#f5f4f3"></div>
<div class="panel" style="left:283px;top:166px;width:816px;height:490px;"></div>
<div class="tabbar" style="left:284px;top:167px;width:814px;height:28px;"></div>
<div class="tab" style="left:284px;top:167px;width:188px;height:29px;background:#f7f6f5"></div>
<svg class="ic" style="left:290px;top:173px;" width="16" height="16" viewBox="0 0 16 16"><path d="M1.5 1.6H8.6L11.6 4.6V14.5H1.5Z" fill="#fff" stroke="#5f8a3c" stroke-width="1" stroke-dasharray="1.6 .6"/><text x="2.4" y="12.4" font-family="Liberation Sans, sans-serif" font-weight="700" font-size="11" fill="#1fbb4e">P</text></svg>
<span class="t" style="left:308.8px;top:175.00px;letter-spacing:0.096px;">*tst_general (suite_py)</span>
<svg class="ic" style="left:454px;top:177px" width="10" height="10" viewBox="0 0 10 10" fill="none" stroke="#232629" stroke-width="1.15"><path d="M.6.6L9.4 9.4M9.4.6L.6 9.4"/></svg>
<svg class="ic" style="left:1054px;top:176px;" width="10" height="4" viewBox="0 0 10 4"><rect x=".6" y=".6" width="8.8" height="2.8" fill="#fff" stroke="#232629" stroke-width="1.2"/></svg>
<svg class="ic" style="left:1076px;top:176px;" width="10" height="10" viewBox="0 0 10 10"><rect x=".6" y=".6" width="8.8" height="8.8" fill="none" stroke="#232629" stroke-width="1.2"/><rect x="1.1" y="1.1" width="7.8" height="1.4" fill="#fff"/><path d="M.6 2.7H9.4" stroke="#232629" stroke-width="1.1"/></svg>
<div style="left:284px;top:195px;width:12px;height:460px;background:#f5f4f3"></div>
<div class="white" style="left:296px;top:195px;width:26px;height:460px;"></div>
<div style="left:321px;top:195px;width:1px;height:444px;background:#f1f1f1"></div>
<div class="white" style="left:322px;top:195px;width:750px;height:444px;"></div>
<div style="left:324px;top:229px;width:748px;height:17px;background:#e8f2fe"></div>
<div style="left:296px;top:348px;width:17px;height:17px;background:#e6d8e6"></div>
<div style="left:296px;top:211px;width:16px;height:2px;background:#000"></div>
<div style="left:296px;top:245px;width:16px;height:2px;background:#000"></div>
<div class="ln" style="left:296px;top:195px;width:16px;height:460px;overflow:hidden"><div>1</div><div>2</div><div>3</div><div>4</div><div>5</div><div>6</div><div>7</div><div>8</div><div>9</div><div>10</div><div>11</div><div>12</div><div>13</div><div>14</div><div>15</div><div>16</div><div>17</div><div>18</div><div>19</div><div>20</div><div>21</div><div>22</div><div>23</div><div>24</div><div>25</div><div>26</div><div>27</div></div>
<svg class="ic" style="left:312px;top:249px" width="9" height="9" viewBox="0 0 9 9"><circle cx="4.5" cy="4.5" r="4" fill="#e8eef4" stroke="#9aa7b4" stroke-width=".9"/><path d="M2.3 4.5H6.7" stroke="#55606c" stroke-width="1"/></svg>
<div class="code" style="left:324px;top:195px;width:748px;height:444px;overflow:hidden"><div><span class="c"># -*- coding: <span class="sq">utf</span>-8 -*-</span></div><div><span class="k">import</span> names</div><div></div><div><span class="k">def</span> <b class="f">main</b>():</div><div>    startApplication(<i class="s">&quot;AddressBookSWT.jar&quot;</i>)</div><div>    mouseClick(waitForObject(names.open_ToolItem), <span class="n">27</span>, <span class="n">17</span>, <span class="n">0</span>, Button.Button1)</div><div>    chooseFile(waitForObject(names.SWT), <i class="s">&quot;&lt;null&gt;&quot;</i>)</div><div>    activateItem(waitForObjectItem(names.address_Book_Menu, <i class="s">&quot;File&quot;</i>))</div><div>    activateItem(waitForObjectItem(names.file_Menu, <i class="s">&quot;Open...&quot;</i>))</div><div>    chooseFile(waitForObject(names.SWT), <i class="s">&quot;MyAddresses.adr&quot;</i>)</div><div>    mouseClick(waitForObjectItem(names.address_Book_MyAddresses_adr_Table, <i class="s">&quot;1/1&quot;</i>), <span class="n">77</span>, <span class="n">2</span>, <span class="n">0</span>, Button.Button1)</div><div>    activateItem(waitForObjectItem(names.address_Book_MyAddresses_adr_Menu, <i class="s">&quot;Edit&quot;</i>))</div><div>    activateItem(waitForObjectItem(names.edit_Menu, <i class="s">&quot;Add...&quot;</i>))</div><div>    activateItem(waitForObjectItem(names.address_Book_MyAddresses_adr_Menu, <i class="s">&quot;Edit&quot;</i>))</div><div>    activateItem(waitForObjectItem(names.edit_Menu, <i class="s">&quot;Add...&quot;</i>))</div><div>    mouseClick(waitForObject(names.address_Book_Add_Forename_Text), <span class="n">68</span>, <span class="n">14</span>, <span class="n">0</span>, Button.Button1)</div><div>    type(waitForObject(names.address_Book_Add_Forename_Text), <i class="s">"<span class="sq">Jane</span>"</i>)</div><div>    type(waitForObject(names.address_Book_Add_Surname_Text), <i class="s">&quot;&lt;Tab&gt;&quot;</i>)</div><div>    type(waitForObject(names.address_Book_Add_Surname_Text), <i class="s">"<span class="sq">Doe</span>"</i>)</div><div>    type(waitForObject(names.address_Book_Add_Email_Text), <i class="s">&quot;&lt;Tab&gt;&quot;</i>)</div><div>    type(waitForObject(names.address_Book_Add_Email_Text), <i class="s">&quot;jane.dor&quot;</i>)</div><div>    type(waitForObject(names.address_Book_Add_Email_Text), <i class="s">&quot;&lt;Backspace&gt;&quot;</i>)</div><div>    type(waitForObject(names.address_Book_Add_Email_Text), <i class="s">&quot;e@nowhere.com&quot;</i>)</div><div>    type(waitForObject(names.address_Book_Add_Phone_Text), <i class="s">&quot;&lt;Tab&gt;&quot;</i>)</div><div>    type(waitForObject(names.address_Book_Add_Phone_Text), <i class="s">&quot;123 555 1212&quot;</i>)</div><div>    clickButton(waitForObject(names.address_Book_Add_OK_Button))</div></div>
<div style="left:322px;top:639px;width:750px;height:16px;background:#eff0f1"></div>
<div style="left:326px;top:643px;width:635px;height:8px;background:#cfd2d3;border:1px solid #9da0a2;border-radius:4px"></div>
<div style="left:1072px;top:195px;width:26px;height:435px;background:#fff"></div>
<div style="left:1072px;top:630px;width:26px;height:25px;background:#f7f6f5"></div>
<div style="left:1072px;top:318px;width:2px;height:312px;background:#e4e4e4"></div>
<div style="left:1072px;top:195px;width:25px;height:123px;background:#e8f2fe;border:1px solid #3d99f5"></div>
<div style="left:1074px;top:199px;width:22px;height:5px;background:#bdbdbd;border:1px solid #2e2a28"></div>
<div style="left:1074px;top:208px;width:22px;height:5px;background:#bdbdbd;border:1px solid #2e2a28"></div>
<div style="left:1074px;top:234px;width:22px;height:5px;background:#f4e4f4;border:1px solid #dcb4dc"></div>
<div class="panel" style="left:283px;top:660px;width:816px;height:193px;background:#fff"></div>
<div style="left:284px;top:661px;width:814px;height:28px;background:#e2deda;border-bottom:1px solid #d0ccc7"></div>
<div class="white" style="left:284px;top:661px;width:122px;height:28px;border-right:1px solid #d0ccc7"></div>
<svg class="ic" style="left:288px;top:666px;" width="16" height="16" viewBox="0 0 16 16"><path d="M2.7 3V14L4.4 16H7L8.4 14.4H13.4V3Z" fill="#eef2fc" stroke="#b9a878" stroke-width="1"/><rect x=".9" y=".9" width="14" height="2.7" fill="#7d95c8"/><path d="M4.4 5.6H7.2M4.4 11.6H7.2" stroke="#00a600" stroke-width="1.3"/><path d="M4.4 8.6H7.6" stroke="#f22" stroke-width="1.3"/><path d="M8.6 5.6H12M9.4 8.6H12M8.6 11.6H12M9.4 14.4H12" stroke="#8b9dc8" stroke-width="1.1"/></svg>
<span class="t" style="left:308.3px;top:669.00px;letter-spacing:-0.166px;">Test Results</span>
<svg class="ic" style="left:388px;top:671px" width="10" height="10" viewBox="0 0 10 10" fill="none" stroke="#232629" stroke-width="1.15"><path d="M.6.6L9.4 9.4M9.4.6L.6 9.4"/></svg>
<svg class="ic" style="left:410px;top:666px;" width="16" height="16" viewBox="0 0 16 16"><rect x="1.6" y="2.4" width="11" height="13.2" fill="#f6f8fe" stroke="#8c7c3c"/><rect x=".1" y=".9" width="14" height="2.7" fill="#7d95c8"/><rect x="3" y="6.1" width="3.1" height="2.8" fill="#f11"/><rect x="3" y="10.2" width="3.1" height="2.8" fill="#0a9a0a"/><path d="M3.4 4.6H11M7.4 6.6H11M7.4 8.6H10" stroke="#8b9dc8" stroke-width="1"/><circle cx="11" cy="12.9" r="3.5" fill="#fff" stroke="#1c5ca8" stroke-width="1.2"/><path d="M11 10.8V13L12.4 14.2" fill="none" stroke="#1c5ca8" stroke-width="1"/></svg>
<span class="t" style="left:429.2px;top:669.00px;letter-spacing:-0.007px;">Test Summary</span>
<svg class="ic" style="left:524px;top:666px;" width="16" height="16" viewBox="0 0 16 16"><path d="M2 1.5H11.4V13.5H2" fill="#f4f8fe" stroke="#bfab6c" stroke-width="1"/><rect x="1.4" y="2.4" width="9" height="10.4" fill="#f4f9ff"/><path d="M1 3.6h1.2M3.2 3.6h1.2M1 5.6h1.2M3.2 5.6h1.2M1 7.6h1.2M3.2 7.6h1.2M1 9.6h1.2M3.2 9.6h1.2M1 11.6h1.2M3.2 11.6h1.2" stroke="#2f5f9e" stroke-width="1.1"/><path d="M5.4 4.6H10M5.4 6.6H10M5.4 8.6H9M5.4 10.6H8" stroke="#8b9dc8" stroke-width="1"/><g stroke="#1f4a3a" stroke-width="1"><path d="M9 7.6L11 9.6M14.4 8.2L13.4 9.8M8 10.6H10M14.6 10.6L16.4 12.6M9.8 13.2L8.4 15M12.6 13.6L13.6 15.4"/></g><circle cx="12.2" cy="11.4" r="2.3" fill="#c8ec4a" stroke="#1f8a9a" stroke-width="1"/></svg>
<span class="t" style="left:545.5px;top:669.00px;letter-spacing:0.245px;">Runner/Server Log</span>
<svg class="ic" style="left:674px;top:668px;" width="16" height="16" viewBox="0 0 16 16"><g><rect x="1.6" y="1.5" width="11" height="11" fill="url(#gWin)" stroke="#a68d52"/><rect x="1.1" y="1" width="12" height="3" fill="url(#gTitle)"/></g></svg>
<span class="t" style="left:693.6px;top:669.00px;letter-spacing:0.130px;">Test Description</span>
<svg class="ic" style="left:1054px;top:670px;" width="10" height="4" viewBox="0 0 10 4"><rect x=".6" y=".6" width="8.8" height="2.8" fill="#fff" stroke="#232629" stroke-width="1.2"/></svg>
<svg class="ic" style="left:1076px;top:670px;" width="10" height="10" viewBox="0 0 10 10"><rect x=".6" y=".6" width="8.8" height="8.8" fill="none" stroke="#232629" stroke-width="1.2"/><rect x="1.1" y="1.1" width="7.8" height="1.4" fill="#fff"/><path d="M.6 2.7H9.4" stroke="#232629" stroke-width="1.1"/></svg>
<span class="t" style="left:574.2px;top:697.00px;letter-spacing:-0.095px;">Recent Test Results</span>
<svg class="ic" style="left:707px;top:701px" width="10" height="5" viewBox="0 0 10 5"><path d="M0 0H10L5 5Z" fill="#232629"/></svg>
<div class="vsep" style="left:726px;top:691px;width:1px;height:25px;"></div>
<div class="vsep" style="left:777px;top:691px;width:1px;height:25px;"></div>
<div class="vsep" style="left:828px;top:691px;width:1px;height:25px;"></div>
<div class="vsep" style="left:879px;top:691px;width:1px;height:25px;"></div>
<div class="vsep" style="left:930px;top:691px;width:1px;height:25px;"></div>
<svg class="ic" style="left:733px;top:695px;" width="16" height="16" viewBox="0 0 16 16"><path d="M5.6 2.6Q5.6 1.7 6.5 1.7H9.4Q10.3 1.7 10.3 2.6V8.4H13.4L8 14.8L2.5 8.4H5.6Z" fill="url(#gArr)" stroke="#c4850e" stroke-width="1.1" stroke-linejoin="round"/></svg>
<svg class="ic" style="left:755px;top:695px;" width="16" height="16" viewBox="0 0 16 16"><path d="M8 1.2L13.5 7.2H10.4V13.4Q10.4 14.3 9.5 14.3H6.5Q5.6 14.3 5.6 13.4V7.2H2.5Z" fill="url(#gArr)" stroke="#c4850e" stroke-width="1.1" stroke-linejoin="round"/></svg>
<svg class="ic" style="left:784px;top:695px;" width="16" height="16" viewBox="0 0 16 16"><rect x="2.7" y="2.7" width="9.6" height="9.6" fill="#c9e9fc" stroke="#8a91ad"/><rect x="4.8" y="4.8" width="9.6" height="9.6" fill="url(#gSq)" stroke="#8a91ad"/><path d="M6 9.6H13.2M9.6 6V13.2" stroke="#0c4c8c" stroke-width="1.3"/></svg>
<svg class="ic" style="left:806px;top:695px;" width="16" height="16" viewBox="0 0 16 16"><rect x="2.7" y="2.7" width="9.6" height="9.6" fill="#c9e9fc" stroke="#8a91ad"/><rect x="4.8" y="4.8" width="9.6" height="9.6" fill="url(#gSq)" stroke="#8a91ad"/><path d="M6 9.6H13.2" stroke="#0c4c8c" stroke-width="1.3"/></svg>
<svg class="ic" style="left:835px;top:695px;" width="16" height="16" viewBox="0 0 16 16"><rect x="4.4" y="2.4" width="11.6" height="11.8" fill="#8a8a8a"/><rect x="3.7" y="1.7" width="11.4" height="11.6" fill="#fff" stroke="#9a9a9a"/><rect x="5.4" y="3.4" width="8.4" height="8.4" fill="url(#gSky)"/><rect x="5.4" y="10.2" width="8.4" height="1.6" fill="#7cc864"/><path d="M6 9.8Q8 6.6 10.8 9.8Z" fill="#9a98a8"/><path d="M.4 5.9Q1.6 6.4 1.6 7.6V11.2Q1.6 12.4 .4 12.9M2.8 5.9Q1.6 6.4 1.6 7.6M2.8 12.9Q1.6 12.4 1.6 11.2" fill="none" stroke="#666" stroke-width=".9"/></svg>
<svg class="ic" style="left:857px;top:695px;" width="16" height="16" viewBox="0 0 16 16"><rect x="0" y="4.6" width="15.8" height="7" fill="#e2f2fc"/><rect x="0" y="1.4" width="15.8" height="3.4" rx=".6" fill="#a5a9bd"/><rect x="0" y="12" width="15.8" height="3.6" rx=".6" fill="#a5a9bd"/><path d="M3.4 4.6V12M12.6 4.6V12" stroke="#a5a9bd" stroke-width=".9"/><path d="M2 2.4h2v1.6h-2zM12 2.4h2v1.6h-2zM2 13h2v1.6h-2zM7 13h2v1.6h-2zM12 13h2v1.6h-2z" fill="#fff"/><path d="M6.6 .7H9.4V5.2H12.4L8 10.6L3.6 5.2H6.6Z" fill="#fffaf0" stroke="#e2b868" stroke-width="1.1" stroke-linejoin="round"/></svg>
<svg class="ic" style="left:886px;top:695px;" width="16" height="16" viewBox="0 0 16 16"><path d="M5 .6H11.4L15.6 5V11.2L11.4 15.4H5L.8 11.2V5Z" fill="#f9b4b8" stroke="#f4a0a6" stroke-width=".8"/><path d="M5.6 1.6H10.8L14 4.8Q8 3.2 2.4 6.2Z" fill="#fcd8da"/><path d="M5.4 5L8.2 7.8L11 5L12.2 6.2L9.4 9" fill="none" stroke="#fff" stroke-width="1.4"/><path d="M4.2 5.6L8 9.4L15.6 6.4V8.4L7.2 15.2Z" fill="#72ee72" stroke="#4aa84a" stroke-width=".6"/></svg>
<svg class="ic" style="left:909px;top:695px;" width="16" height="16" viewBox="0 0 16 16"><rect x="1.7" y="2.5" width="9.8" height="10" fill="#fafcff" stroke="#b9bccb"/><rect x="3.2" y="4" width="6.800000000000001" height="7" fill="url(#gSky)"/><path d="M10.6 1.4L13.7 4.5L10.6 7.6L7.5 4.5Z" fill="#e8d28e" stroke="#d9bf6e" stroke-width=".9" stroke-linejoin="round"/><path d="M10.6 2.2L11.2 3.9L12.899999999999999 4.5L11.2 5.1L10.6 6.8L10.0 5.1L8.3 4.5L10.0 3.9Z" fill="#fffdf2"/></svg>
<svg class="ic" style="left:937px;top:695px;" width="16" height="16" viewBox="0 0 16 16"><path d="M1.7 1.7H13.4V3.4L9.3 7.4V13.4L5.8 15.2V7.4L1.7 3.4Z" fill="url(#gFun)" stroke="#6f7da8" stroke-width="1" stroke-linejoin="round"/><path d="M7.4 7.6H9" stroke="#6f7da8" stroke-width="1"/></svg>
<svg class="ic" style="left:962px;top:701px" width="10" height="5" viewBox="0 0 10 5"><path d="M0 0H10L5 5Z" fill="#232629"/></svg>
<svg class="ic" style="left:981px;top:695px;" width="16" height="16" viewBox="0 0 16 16"><path d="M6.6 2.6H11.6Q12.8 2.6 12.4 3.8L8.4 12.4Q8 13.4 7 13.4H3.2Q2 13.4 2.6 12.2L6 3.6Q6.2 2.6 6.6 2.6Z" fill="#fbf7f2" stroke="#c9b28e" stroke-width="1.1"/><path d="M4.6 7.6H10.6L8.2 12.8H2.8Z" fill="#e4d3bd"/><path d="M9.2 13.6H15" stroke="#b49a74" stroke-width="1.1"/></svg>
<svg class="ic" style="left:1003px;top:695px;" width="16" height="16" viewBox="0 0 16 16"><path d="M.8 7.4H3.4V11.4H11.6V7.4H14.2V14.4H.8Z" fill="#eef2fa" stroke="#a9b8dc" stroke-width="1.3" stroke-linejoin="miter" opacity="0.85"/><path d="M5.2 9.4L11.4 3.4" stroke="#9ccbe4" stroke-width="1.1" stroke-dasharray="1.4 .7"/><path d="M9.4 2.4H12.6V5.6Z" fill="#a9d3ea"/></svg>
<svg class="ic" style="left:1025px;top:695px;" width="16" height="16" viewBox="0 0 16 16"><path d="M.8 7.4H3.4V11.4H11.6V7.4H14.2V14.4H.8Z" fill="#eef2fa" stroke="#6d89c4" stroke-width="1.3" stroke-linejoin="miter" opacity="1"/><path d="M2.4 3.2L8.4 9.2" stroke="#3f8ac2" stroke-width="1.2" stroke-dasharray="1.4 .7"/><path d="M9.8 7V10.6H6.2Z" fill="#3f8ac2"/></svg>
<svg class="ic" style="left:1047px;top:695px;" width="16" height="16" viewBox="0 0 16 16"><path d="M8.4 2.8H3.4Q1.8 2.8 1.8 4.4V10.6Q1.8 12.2 3.4 12.2H9.6Q11.2 12.2 11.2 10.6V8" fill="none" stroke="#6e6e6e" stroke-width="1.3" stroke-linecap="round"/><path d="M7 8.6L13 2.6" stroke="#7a7a7a" stroke-width="1.8"/><path d="M9.8 1.2H14.8V6.2Z" fill="#7a7a7a"/></svg>
<svg class="ic" style="left:1077px;top:695px;" width="16" height="16" viewBox="0 0 16 16"><g fill="none" stroke="#3c3c3c" stroke-width="1"><circle cx="7.4" cy="2.3" r="1.9"/><circle cx="7.4" cy="7.3" r="1.9"/><circle cx="7.4" cy="12.3" r="1.9"/></g></svg>
<div style="left:284px;top:718px;width:814px;height:27px;background:#fbfbfb"></div>
<div style="left:284px;top:745px;width:814px;height:1px;background:#bdbdbd"></div>
<div style="left:445px;top:718px;width:1px;height:27px;background:#cfcfcf"></div>
<div style="left:852px;top:718px;width:1px;height:27px;background:#cfcfcf"></div>
<span class="t" style="left:288.6px;top:725.00px;letter-spacing:-0.253px;">Result</span>
<span class="t" style="left:450.6px;top:725.00px;letter-spacing:-0.130px;">Message</span>
<span class="t" style="left:857.8px;top:725.00px;letter-spacing:-0.333px;">Time</span>
<div class="dots" style="left:814px;top:859px;width:2px;height:14px;background:repeating-linear-gradient(#aca396 0 2px,transparent 2px 4px)"></div>
</body>
</html>
